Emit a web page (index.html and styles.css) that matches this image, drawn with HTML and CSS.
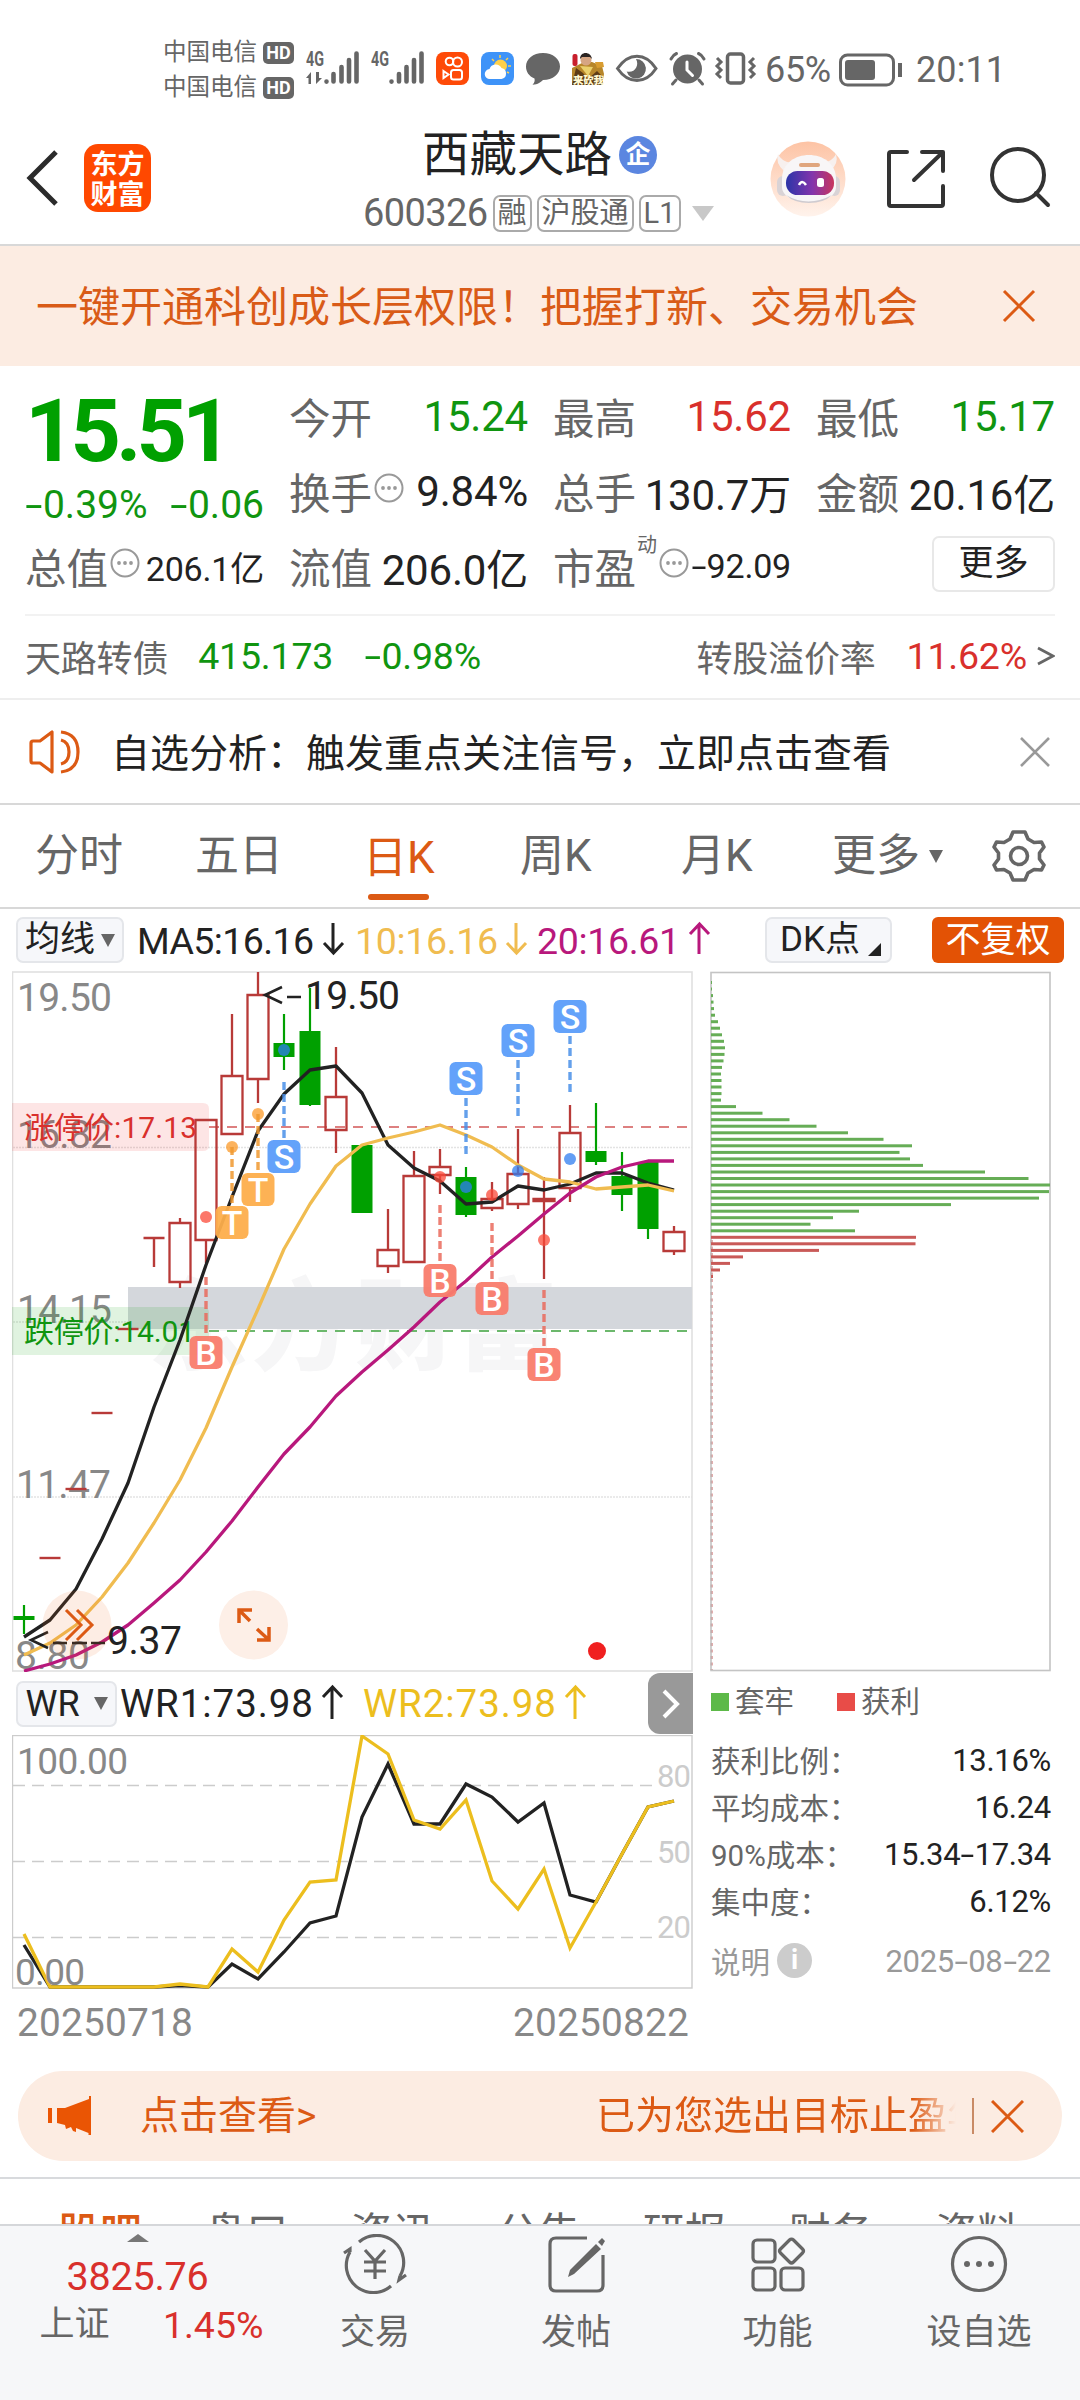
FILE: index.html
```html
<!DOCTYPE html>
<html lang="zh-CN">
<head>
<meta charset="utf-8">
<title>西藏天路 600326</title>
<link rel="stylesheet" href="styles.css">
</head>
<body>
<header class="status">
  <div class="carriers">
    <div class="carrier">中国电信<b>HD</b></div>
    <div class="carrier">中国电信<b>HD</b></div>
  </div>
  <svg class="status-icons" width="452" height="40" viewBox="306 49 452 40">
    <g fill="#666">
      <text x="306" y="66" font-size="20" font-weight="700" textLength="18" lengthAdjust="spacingAndGlyphs">4G</text>
      <text x="371" y="66" font-size="20" font-weight="700" textLength="18" lengthAdjust="spacingAndGlyphs">4G</text>
      <path d="M306 78l5-6v12h-2.500v-6zM316 72v12l6-6h-3v-6z"/>
    </g>
    <g stroke="#666" stroke-width="4.600" stroke-linecap="round">
      <path d="M326.500 81.500v.1M333.500 74v7.500M341.500 67v14.500M349 60v21.500M356.500 53.500v28M391.500 81.500v.1M399 74v7.500M406.500 67v14.500M414 60v21.500M421.500 53.500v28"/>
    </g>
    <rect x="436" y="52" width="33" height="33" rx="8" fill="#fe4a08"/>
    <g fill="none" stroke="#fff" stroke-width="2"><circle cx="449.500" cy="61.500" r="3.800"/><circle cx="457.500" cy="62" r="4.500"/><rect x="451" y="70" width="11" height="9.500" rx="2.500"/><path d="M443.500 71l5 3.500-5 3.500z"/></g>
    <rect x="481" y="52" width="33" height="33" rx="8" fill="#3e93f8"/>
    <circle cx="500.500" cy="66" r="6.500" fill="#ffd04a"/>
    <path d="M500 55v3M508 58l-2 2M511 66h-3M509 73l-2-1M492 59l2 2" stroke="#ffd04a" stroke-width="1.500"/>
    <path d="M490 79a5 5 0 0 1-.5-10 6.500 6.500 0 0 1 12-1 5.600 5.600 0 0 1 0 11z" fill="#fff"/>
    <path d="M543 53c10 0 17 6 17 13.500S553 80 543 80c-2 2-5 4.500-10.500 4.800 2-1.600 2.500-4 2-6.200C529 76 526 72 526 66.500 526 59 533 53 543 53z" fill="#666"/>
    <g>
      <path d="M572 85V68l8-4 4-2h8l10 4 2 8-2 11z" fill="#b7862a"/>
      <path d="M576 68l7 5 5 6 9-8 6 6v8h-31z" fill="#5d3b16"/>
      <path d="M580 66l8 10 5-9z" fill="#ead06c"/>
      <circle cx="586" cy="60" r="5.500" fill="#d6a583"/>
      <path d="M580 59c0-8 11-8 12 0l-2-2h-8z" fill="#2b2422"/>
      <rect x="572.500" y="54" width="5" height="12" rx="2" fill="#c81f2c"/>
      <path d="M595 62h8l1 5-7 1z" fill="#d99d31"/>
      <text x="573" y="84" font-size="10.500" font-weight="900" fill="#fff8d0" textLength="31">来砍我</text>
    </g>
    <path d="M617.500 68.500c11-16.500 28-16.500 38.500 0-10.500 16-27.500 16-38.500 0z" fill="none" stroke="#666" stroke-width="3"/>
    <path d="M636 59a9.800 9.800 0 1 1-9.300 12.500c8 2 13-6 9.300-12.500z" fill="#666"/>
    <circle cx="687.500" cy="69" r="14.500" fill="#666"/>
    <path d="M671 59q2-4 5.500-5.500M704 59q-2-4-5.500-5.500M676 80l-3.500 4M699 80l3.500 4" stroke="#666" stroke-width="3" stroke-linecap="round" fill="none"/>
    <path d="M687 62v8l5.500 5.500" stroke="#fff" stroke-width="3" fill="none" stroke-linecap="round"/>
    <rect x="727.500" y="54" width="16" height="29" rx="3" fill="none" stroke="#666" stroke-width="3.500"/>
    <path d="M717 58l4 4-4 4 4 4-4 4 4 4M754 58l-4 4 4 4-4 4 4 4-4 4" fill="none" stroke="#666" stroke-width="3"/>
  </svg>
  <span class="battery-pct">65%</span>
  <svg width="64" height="34" viewBox="0 0 64 34"><rect x="1.500" y="2" width="53" height="30" rx="7" fill="none" stroke="#666" stroke-width="3"/><rect x="6" y="7" width="30" height="20" rx="3" fill="#666"/><path d="M61 10v14" stroke="#666" stroke-width="4"/></svg>
  <span class="clock">20:11</span>
</header>

<nav class="titlebar">
  <svg class="back" width="34" height="58" viewBox="0 0 34 58"><path d="M30 3L4 29l26 26" fill="none" stroke="#2b2b2b" stroke-width="5"/></svg>
  <div class="logo"><span>东方</span><span>财富</span></div>
  <div class="stock">
    <div class="stock-name">西藏天路<i>企</i></div>
    <div class="stock-code">600326<em>融</em><em>沪股通</em><em>L1</em><svg width="22" height="15" viewBox="0 0 22 15"><path d="M0 0h22L11 15z" fill="#c8c8c8"/></svg></div>
  </div>
  <svg class="robot" width="76" height="76" viewBox="0 0 76 76">
    <defs>
      <linearGradient id="halo" x1="0" y1="0" x2="0" y2="1"><stop offset="0" stop-color="#fdc3a4"/><stop offset="1" stop-color="#fff3ec"/></linearGradient>
      <linearGradient id="visor"><stop offset="0" stop-color="#2c35a8"/><stop offset=".55" stop-color="#8335ac"/><stop offset="1" stop-color="#c8365e"/></linearGradient>
    </defs>
    <circle cx="38" cy="38" r="37.500" fill="url(#halo)"/>
    <path d="M14 30q-9-8-6-17 3 7 13 9zM60 30q9-7 6-17-3 7-13 9z" fill="#f7f0ee"/>
    <rect x="7" y="35" width="12" height="20" rx="6" fill="#d9d3d6"/><rect x="59" y="35" width="11" height="20" rx="6" fill="#d9d3d6"/>
    <path d="M12 38C12 6 66 6 66 38v8c0 20-54 20-54 0z" fill="#f8f6f7"/>
    <path d="M16 54q22 13 46 0-8 8-23 8t-23-8z" fill="#cfcbd0"/>
    <rect x="29" y="22" width="21" height="4" rx="2" fill="#e0a67e"/>
    <rect x="16" y="30" width="48" height="24" rx="11.500" fill="url(#visor)"/>
    <path d="M29 44q3-6 7 0" fill="none" stroke="#fff" stroke-width="2.500"/><rect x="47" y="37" width="7" height="9" rx="2.500" fill="#fff"/>
  </svg>
  <svg class="share" width="60" height="60" viewBox="0 0 60 60"><g fill="none" stroke="#333" stroke-width="4" stroke-linecap="round" stroke-linejoin="round"><path d="M22 4H6q-2 0-2 2v50q0 2 2 2h50q2 0 2-2V38M37 4h21v19M57 5L29 32"/></g></svg>
  <svg width="62" height="62" viewBox="0 0 62 62"><g fill="none" stroke="#333" stroke-width="4" stroke-linecap="round"><circle cx="29" cy="29" r="26"/><path d="M47 47l12 12"/></g></svg>
</nav>

<section class="banner">
  <span>一键开通科创成长层权限！把握打新、交易机会</span>
  <svg width="34" height="34" viewBox="0 0 34 34"><path d="M2 2l30 30M32 2L2 32" stroke="#dc5a14" stroke-width="3"/></svg>
</section>

<section class="quote">
  <div class="price">
    <div class="last">15.51</div>
    <div class="change"><span><u>-</u>0.39%</span><span><u>-</u>0.06</span></div>
  </div>
  <div class="cell"><label>今开</label><span class="down">15.24</span></div>
  <div class="cell"><label>最高</label><span class="up">15.62</span></div>
  <div class="cell"><label>最低</label><span class="down">15.17</span></div>
  <div class="cell"><label>换手</label><svg class="dots" width="30" height="30"><use href="#dots"/></svg><span>9.84%</span></div>
  <div class="cell"><label>总手</label><span>130.7万</span></div>
  <div class="cell"><label>金额</label><span>20.16亿</span></div>
  <div class="cell small"><label>总值</label><svg class="dots" width="30" height="30"><use href="#dots"/></svg><span>206.1亿</span></div>
  <div class="cell"><label>流值</label><span>206.0亿</span></div>
  <div class="cell small"><label>市盈</label><sup>动</sup><svg class="dots" width="30" height="30"><use href="#dots"/></svg><span><u>-</u>92.09</span></div>
  <div class="cell"><button class="more">更多</button></div>
</section>

<section class="bond">
  <span>天路转债</span><span class="down code">415.173</span><span class="down"><u>-</u>0.98%</span>
  <span class="premium">转股溢价率</span><span class="up">11.62%</span>
  <svg width="18" height="20" viewBox="0 0 18 20"><path d="M1 2l15 8-15 8" fill="none" stroke="#666" stroke-width="2.800"/></svg>
</section>

<section class="notice">
  <svg width="52" height="46" viewBox="0 0 52 46"><g fill="none" stroke="#dc5a14" stroke-width="3.200" stroke-linejoin="round"><path d="M23 3v40L11 34H4q-2 0-2-2V14q0-2 2-2h7z"/><path d="M32 11q8 2 8 12t-8 12M32 3q17 2 17 20T32 43"/></g></svg>
  <span>自选分析：触发重点关注信号，立即点击查看</span>
  <svg width="30" height="30" viewBox="0 0 30 30"><path d="M1 1l28 28M29 1L1 29" stroke="#999" stroke-width="2.600"/></svg>
</section>

<nav class="periods">
  <span>分时</span><span>五日</span><span><b class="on">日K</b></span><span>周K</span><span>月K</span><span>更多<svg width="14" height="13" viewBox="0 0 14 13"><path d="M0 0h14L7 13z" fill="#666"/></svg></span>
  <svg class="gear" width="54" height="54" viewBox="-27 -27 54 54"><g fill="none" stroke="#666" stroke-width="3.600" stroke-linejoin="round"><path d="M-6-24H6L9-17l6 3.500 7.500-.5 2.500 5-4.500 6v6l4.500 6-2.500 5-7.500-.5L9 17l-3 7H-6l-3-7-6-3.500-7.500.5-2.500-5 4.500-6v-6L-25-9l2.500-5 7.500.5 6-3.500z"/><circle r="8.500"/></g></svg>
</nav>

<section class="ma">
  <button class="chip">均线<svg width="14" height="13" viewBox="0 0 14 13"><path d="M0 0h14L7 13z" fill="#666"/></svg></button>
  <svg class="ma-values" width="580" height="44" viewBox="138 920 580 44" font-size="37.500">
    <g fill="#222"><text x="137" y="955.500" textLength="177">MA5:16.16</text></g>
    <g fill="#f0bc50"><text x="355" y="955.500" textLength="143">10:16.16</text></g>
    <g fill="#b8187c"><text x="537" y="955.500" textLength="143">20:16.61</text></g>
    <g fill="none" stroke-width="3"><path stroke="#222" d="M333 925v29M324 945l9.500 10 9.500-10"/><path stroke="#f0bc50" d="M516 925v29M507 945l9.500 10 9.500-10"/><path stroke="#b8187c" d="M699 956v-29M690 936l9.500-10 9.500 10"/></g>
  </svg>
  <button class="chip dk">DK点<svg width="13" height="13" viewBox="0 0 13 13"><path d="M13 0v13H0z" fill="#222"/></svg></button>
  <button class="adjust">不复权</button>
</section>

<main class="charts">
  <div class="left">
    <svg class="kline" width="682" height="701" viewBox="12 971 682 701">
      <text x="148" y="1362" font-size="100" font-weight="900" fill="#f6f6f7" textLength="410">东方财富</text>
      <path d="M13 1147.500h679M13 1322h679M13 1497h679" stroke="#e3e3e3" stroke-width="1.500" stroke-dasharray="2 1"/>
      <rect x="12.500" y="972" width="679.500" height="699" fill="none" stroke="#e0e0e0" stroke-width="1.600"/>
      <rect x="128" y="1287" width="564" height="42" fill="#d4d7dc"/>
      <path d="M209 1127h482" stroke="#dd8080" stroke-width="2" stroke-dasharray="10 8"/>
      <path d="M209 1331h482" stroke="#6cb86c" stroke-width="2" stroke-dasharray="10 8"/>
      <g fill="#888" font-size="39">
        <text x="17" y="1011" textLength="95">19.50</text><text x="17" y="1148" textLength="95">16.82</text><text x="17" y="1322.500" textLength="95">14.15</text><text x="16" y="1498" textLength="95">11.47</text><text x="15" y="1669" textLength="75">8.80</text>
      </g>
      <path d="M12 1103h191q6 0 6 6v36q0 6-6 6H12z" fill="#f00000" opacity=".1"/>
      <path d="M12 1307h191q6 0 6 6v36q0 6-6 6H12z" fill="#00a000" opacity=".12"/>
      <g id="candles"></g>
      <text x="24" y="1138" font-size="30" fill="#d9302c" textLength="173">涨停价:17.13</text>
      <text x="24" y="1342" font-size="30" fill="#109510" textLength="171">跌停价:14.01</text>
      <g fill="none" stroke-width="3.300" stroke-linejoin="round">
        <polyline stroke="#222" points="24,1637 50,1620 76,1589 102,1539 128,1483 154,1407 180,1340 206,1265 232,1197 258,1131 284,1094 310,1070 336,1066 362,1093 388,1145 414,1168 440,1181 466,1204 492,1202 518,1186 544,1190 570,1184 596,1173 622,1173 648,1183 674,1190"/>
        <polyline stroke="#f0bc50" points="24,1655 50,1643 76,1625 102,1597 128,1563 154,1523 180,1480 206,1428 232,1367 258,1309 284,1249 310,1204 336,1166 362,1145 388,1138 414,1132 440,1125 466,1135 492,1147 518,1165 544,1179 570,1182 596,1189 622,1187 648,1185 674,1191"/>
        <polyline stroke="#b8187c" points="24,1671 50,1664 76,1655 102,1642 128,1625 154,1603 180,1580 206,1552 232,1521 258,1487 284,1454 310,1427 336,1396 362,1372 388,1350 414,1327 440,1302 466,1281 492,1257 518,1236 544,1214 570,1193 596,1177 622,1167 648,1161 674,1161"/>
      </g>
      <g id="markers"></g>
      <g fill="none" stroke="#222" stroke-width="2.600"><path d="M282 987l-17 8 17 8M287 997h14M48 1632l-17 8 17 8M53 1643h14M72 1643h15M91 1643h14"/></g>
      <text x="305" y="1009" font-size="39" fill="#222" textLength="95">19.50</text>
      <text x="107" y="1654" font-size="39" fill="#222" textLength="75">9.37</text>
      <circle cx="77" cy="1625" r="34.500" fill="#f06820" opacity=".12"/>
      <circle cx="253.500" cy="1625" r="34.500" fill="#fdefe7"/>
      <path d="M66 1610l15 15-15 15M77 1610l15 15-15 15" fill="none" stroke="#dc5a14" stroke-width="3"/>
      <path d="M239 1623v-13h13M239 1610l11 11M257 1640h12v-13M269 1640l-12-11" fill="none" stroke="#dc5a14" stroke-width="3.500"/>
      <circle cx="597" cy="1651" r="9" fill="#f02020"/>
    </svg>
    <div class="wr-head">
      <button class="chip">WR<svg width="14" height="13" viewBox="0 0 14 13"><path d="M0 0h14L7 13z" fill="#666"/></svg></button>
      <svg width="475" height="44" viewBox="120 1682 475 44" font-size="38.500">
        <text x="120" y="1717" fill="#222" textLength="193">WR1:73.98</text><text x="363" y="1717" fill="#ecbe1e" textLength="193">WR2:73.98</text>
        <g fill="none" stroke-width="3"><path stroke="#222" d="M332 1719v-31M323 1697l9.500-10 9.500 10"/><path stroke="#ecbe1e" d="M575 1719v-31M566 1697l9.500-10 9.500 10"/></g>
      </svg>
      <div class="toggle"><svg width="18" height="30" viewBox="0 0 18 30"><path d="M2 2l13 13L2 28" fill="none" stroke="#fff" stroke-width="4"/></svg></div>
    </div>
    <svg width="682" height="254" viewBox="12 1735 682 254">
      <rect x="12.500" y="1735.500" width="679.500" height="252.500" fill="none" stroke="#ccc" stroke-width="1.400"/>
      <path d="M13 1785.500h642M13 1861.500h642M13 1937.500h642" stroke="#ccc" stroke-width="1.400" stroke-dasharray="12 7"/>
      <g fill="#ccc" font-size="31"><text x="657" y="1787" textLength="34">80</text><text x="657" y="1863" textLength="34">50</text><text x="657" y="1938" textLength="34">20</text></g>
      <g fill="none" stroke-width="3.300">
        <polyline stroke="#222" points="24,1945 50,1987 154,1987 180,1985.500 208,1987 232,1964 258,1979 284,1952 310,1923 336,1916 362,1817 388,1764 414,1824 440,1824 466,1784 492,1797 518,1822 544,1803 570,1895 596,1902 622,1854 648,1807 674,1801"/>
        <polyline stroke="#ecbe1e" points="24,1934 50,1987 154,1987 180,1984 208,1987 232,1949 258,1972 284,1920 310,1882 336,1880 362,1736 388,1754 414,1820 440,1829 466,1800 492,1881 518,1909 544,1869 570,1948 596,1902 622,1854 648,1807 674,1801"/>
      </g>
      <g fill="#888" font-size="37"><text x="17" y="1774" textLength="111">100.00</text><text x="15" y="1985" textLength="70">0.00</text></g>
    </svg>
    <div class="dates"><span>20250718</span><span>20250822</span></div>
  </div>
  <div class="right">
    <svg width="342" height="701" viewBox="710 971 342 701">
      <path d="M711.500 1240v430" stroke="#c65d5c" stroke-width="2" stroke-dasharray="3 3.500"/>
      <rect x="711" y="972.500" width="339" height="698" fill="none" stroke="#c4c4c4" stroke-width="1.600"/>
      <g id="chips"></g>
    </svg>
    <div class="legend"><span><i class="g"></i>套牢</span><span><i class="r"></i>获利</span></div>
    <dl class="stats">
      <div><dt>获利比例：</dt><dd>13.16%</dd></div>
      <div><dt>平均成本：</dt><dd>16.24</dd></div>
      <div><dt>90%成本：</dt><dd>15.34<u>-</u>17.34</dd></div>
      <div><dt>集中度：</dt><dd>6.12%</dd></div>
      <div class="explain"><dt>说明<i>i</i></dt><dd>2025<u>-</u>08<u>-</u>22</dd></div>
    </dl>
  </div>
</main>

<section class="promo">
  <svg width="46" height="40" viewBox="0 0 46 40"><path d="M43 0v39h-2.500V37L28 32v4l-3-1-2-4-5 2-1-4-8-2V12h8L41 3V0zM0 12h4v15H0z" fill="#ea5504"/></svg>
  <span class="promo-link">点击查看&gt;</span>
  <span class="promo-text">已为您选出目标止盈年</span>
  <i class="bar"></i>
  <svg width="33" height="33" viewBox="0 0 33 33"><path d="M1 1l31 31M32 1L1 32" stroke="#dc5a14" stroke-width="3"/></svg>
</section>

<nav class="subtabs"><span class="on">股吧</span><span>盘口</span><span>资讯</span><span>公告</span><span>研报</span><span>财务</span><span>资料</span></nav>

<footer class="dock">
  <div class="index">
    <svg width="22" height="8" viewBox="0 0 22 8"><path d="M0 8h22L11 0z" fill="#777"/></svg>
    <strong>3825.76</strong>
    <p><span>上证</span><b>1.45%</b></p>
  </div>
  <a><svg width="66" height="60" viewBox="-33 -30 66 60"><g fill="none" stroke="#666" stroke-width="3.200"><path d="M-16-22A27 27 0 0 1 25 12M25 12l-1 4 7-5M16 22A27 27 0 0 1-25-12M-25-12l0-3-6 4"/><path d="M-10-14L0-3 10-14M-11-2h22M-11 7h22M0-3v18"/></g></svg>交易</a>
  <a><svg width="60" height="60" viewBox="0 0 60 60"><g fill="none" stroke="#666" stroke-width="3.200"><path d="M41 4H10q-6 0-6 6v41q0 6 6 6h41q6 0 6-6V21"/></g><path d="M50 10l5 5-27 25-6 3 2-7zM52 8l4-4 3 3-3 5z" fill="#666"/></svg>发帖</a>
  <a><svg width="60" height="60" viewBox="0 0 60 60"><g fill="none" stroke="#666" stroke-width="3.200"><rect x="5" y="6" width="22" height="22" rx="4"/><rect x="5" y="34" width="22" height="22" rx="4"/><rect x="33" y="34" width="22" height="22" rx="4"/><path d="M41.500 6q2-2 4 0l9 9q2 2 0 4l-9 9q-2 2-4 0l-9-9q-2-2 0-4z"/></g></svg>功能</a>
  <a><svg width="60" height="60" viewBox="0 0 60 60"><circle cx="30" cy="30" r="26.500" fill="none" stroke="#666" stroke-width="3.200"/><g fill="#666"><circle cx="18" cy="30" r="3"/><circle cx="30" cy="30" r="3"/><circle cx="42" cy="30" r="3"/></g></svg>设自选</a>
</footer>

<svg class="defs" width="0" height="0"><symbol id="dots" viewBox="0 0 30 30"><circle cx="15" cy="15" r="13.500" fill="none" stroke="#999" stroke-width="2"/><g fill="#999"><circle cx="9" cy="15" r="1.900"/><circle cx="15" cy="15" r="1.900"/><circle cx="21" cy="15" r="1.900"/></g></symbol></svg>
<script src="chart.js"></script>
</body>
</html>
```
FILE: styles.css
```css
* { box-sizing: border-box; margin: 0; padding: 0; }
body {
  width: 1080px; height: 2400px; overflow: hidden; background: #fff; color: #666;
  font-family: Roboto, "Noto Sans CJK SC", sans-serif;
  display: flex; flex-direction: column;
}
svg { display: block; flex: none; font-family: Roboto, "Noto Sans CJK SC", sans-serif; }
i, em { font-style: normal; }
button { font: inherit; border: 0; background: none; }
u { display: inline-block; width: .46em; text-align: center; text-decoration: none; transform: scaleX(1.6); }
.up { color: #d9302c; }
.down { color: #109510; }
.defs { position: absolute; }

.status { height: 122px; padding: 18px 0 0 163px; display: flex; align-items: center; }
.carriers { width: 143px; font-size: 23.500px; }
.carrier { display: flex; align-items: center; height: 35px; gap: 6px; line-height: 35px; }
.carrier b { width: 31px; height: 22px; border-radius: 5px; background: #666; color: #fff; font-size: 18px; line-height: 22px; text-align: center; }
.status-icons { margin-top: -2px; }
.battery-pct { width: 81px; padding-left: 7px; font-size: 36px; line-height: 36px; letter-spacing: -.3px; }
.clock { margin-left: 13px; font-size: 36px; line-height: 36px; letter-spacing: .1px; }

.titlebar { height: 124px; border-bottom: 2px solid #d8d8d8; display: flex; padding: 0 28px 0 26px; align-items: flex-start; }
.back { margin-top: 27px; }
.logo { width: 67px; height: 68px; margin: 22px 0 0 24px; border-radius: 14px; background: #ff4800; color: #fff; display: flex; flex-direction: column; justify-content: center; font: 700 27px/30px "Noto Sans CJK SC", sans-serif; text-align: center; }
.stock { width: 426px; margin-left: 174px; padding-left: 38px; display: flex; flex-direction: column; align-items: flex-start; }
.stock-name { margin: 5px 0 0 59px; font-size: 47.500px; line-height: 52px; height: 55px; color: #222; display: flex; align-items: center; gap: 7px; }
.stock-name i { width: 38px; height: 38px; border-radius: 50%; background: #5b86e0; color: #fff; font-size: 25px; font-weight: 700; line-height: 38px; text-align: center; }
.stock-code { margin-top: 12px; height: 38px; font-size: 38px; line-height: 38px; letter-spacing: -.6px; display: flex; align-items: center; gap: 5px; }
.stock-code em { height: 37px; border: 2px solid #aaa; border-radius: 7px; padding: 0 3px; font-size: 29px; line-height: 32px; letter-spacing: 0; }
.stock-code svg { margin-left: 6px; }
.robot { margin: 19px 0 0 19px; }
.share { margin: 26px 44px 0 39px; }
.titlebar > svg:last-child { margin-top: 24px; }

.banner { height: 120px; background: #fcece2; display: flex; align-items: center; justify-content: space-between; padding: 2px 44px 2px 36px; font-size: 42px; line-height: 60px; color: #d95b17; }
.banner span { padding-top: 3px; }

.quote { height: 248px; padding: 12px 25px 0; display: grid; grid-template-columns: 239px 239px 238px 239px; grid-template-rows: 75px 75px 75px; column-gap: 25px; font-size: 42px; color: #222; }
.price { grid-row: span 2; color: #109510; padding-top: 2px; }
.last { height: 102px; font-size: 88px; line-height: 102px; font-weight: 700; letter-spacing: -5px; color: #00a000; }
.change { display: flex; justify-content: space-between; font-size: 39px; line-height: 46px; }
.cell { display: flex; align-items: center; }
.cell label { color: #666; font-size: 41.500px; }
.cell span { margin-left: auto; letter-spacing: -.2px; padding-top: 1px; }
.cell .dots { margin: -5px 0 0 2px; }
.cell sup { font-size: 20px; color: #666; align-self: flex-start; margin-top: 5px; line-height: 24px; margin-left: 1px; }
.small span { font-size: 34px; }
.more { width: 123px; height: 56px; margin: -4px 0 0 auto; border: 2px solid #e8e8e8; border-radius: 7px; font-size: 35px; line-height: 50px; color: #222; }

.bond { height: 84px; margin: 0 25px; padding-bottom: 2px; border-top: 2px solid #f2f2f2; display: flex; align-items: center; font-size: 36px; letter-spacing: -.2px; }
.bond .up, .bond .down { font-size: 37.500px; }
.bond .code { margin: 0 31px 0 30px; }
.premium { margin-left: auto; margin-right: 31px; }
.bond svg { margin-left: 10px; }

.notice { height: 107px; border-top: 2px solid #eee; border-bottom: 2px solid #d8d8d8; display: flex; align-items: center; padding: 0 30px 0 29px; font-size: 39px; color: #222; }
.notice span { margin: -3px auto 0 30px; }

.periods { height: 104px; border-bottom: 2px solid #d8d8d8; padding-left: 35px; display: grid; grid-template-columns: 160px 168px 157px 161px 151px 160px auto; align-items: center; font-size: 44px; line-height: 106px; }
.periods span { display: flex; align-items: center; gap: 9px; height: 102px; }
.periods .on { position: relative; height: 102px; font-weight: 400; color: #dc5a14; }
.periods .on::after { content: ""; position: absolute; left: 5px; right: 6px; bottom: 7px; height: 6px; border-radius: 3px; background: #dc5a14; }

.ma { height: 62px; padding: 0 16px; display: flex; align-items: center; }
.chip { height: 46px; border: 2px solid #e4e6ea; border-radius: 7px; background: #f6f7fa; color: #222; font-size: 35px; line-height: 42px; display: flex; align-items: center; justify-content: center; gap: 6px; }
.ma .chip { width: 108px; }
.ma-values { margin-left: 14px; }
.ma .dk { width: 127px; margin-left: 47px; gap: 8px; }
.dk svg { align-self: flex-end; margin-bottom: 5px; margin-right: -4px; }
.adjust { width: 132px; height: 46px; margin-left: auto; border-radius: 6px; background: #e35205; color: #fff; font-size: 35px; line-height: 47px; }

.charts { height: 1083px; padding-left: 12px; display: flex; gap: 16px; }
.left, .right { display: flex; flex-direction: column; }
.wr-head { height: 63px; padding-left: 4px; display: flex; align-items: center; }
.wr-head .chip { width: 101px; gap: 14px; font-size: 36px; }
.wr-head > svg { margin-left: 3px; }
.toggle { width: 45px; height: 61px; margin-left: auto; margin-right: 1px; border-radius: 12px 0 0 12px; background: #999; display: flex; align-items: center; justify-content: center; }
.dates { display: flex; justify-content: space-between; padding: 9px 5px 0 5px; font-size: 38.800px; line-height: 50px; letter-spacing: .2px; color: #888; }
.right { width: 342px; }
.legend { height: 60px; display: flex; gap: 43px; align-items: center; font-size: 29.500px; line-height: 56px; padding: 0 0 1px 1px; }
.legend span { display: flex; align-items: center; gap: 6px; }
.legend i { width: 18px; height: 18px; }
.legend .g { background: #5db948; }
.legend .r { background: #e84c48; }
.stats { padding-top: 5px; font-size: 29.500px; }
.stats div { height: 47px; padding: 0 1px 0 1px; display: flex; align-items: center; justify-content: space-between; }
.stats dt { padding-bottom: 3px; }
.stats dd { color: #222; font-size: 31px; letter-spacing: -.3px; }
.stats .explain { margin-top: 13px; color: #999; }
.explain dt { display: flex; align-items: center; gap: 7px; }
.stats .explain dd { color: #999; }
.explain i { width: 35px; height: 35px; border-radius: 50%; background: #ccc; color: #fff; font-size: 27px; font-weight: 700; line-height: 35px; text-align: center; }

.promo { height: 90px; margin: 17px 18px 0; border-radius: 45px; background: #fcece2; display: flex; align-items: center; padding: 0 38px 0 30px; font-size: 39px; line-height: 60px; color: #dc5a14; }
.promo-link { margin-left: 46px; }
.promo-text { margin-left: auto; width: 360px; overflow: hidden; white-space: nowrap; -webkit-mask-image: linear-gradient(90deg, #000 88%, transparent 100%); mask-image: linear-gradient(90deg, #000 88%, transparent 100%); }
.bar { width: 2px; height: 36px; margin: 0 17px 0 16px; background: #c98b66; }

.subtabs { height: 47px; margin-top: 16px; border-top: 2px solid #d8dadd; overflow: hidden; display: flex; justify-content: space-between; padding: 30px 61px 0 58px; font-size: 42px; line-height: 50px; }
.subtabs .on { color: #dc5a14; font-weight: 500; }

.dock { height: 176px; background: #f6f7f9; border-top: 2px solid #d5d7da; display: grid; grid-template-columns: 275px 200px 202px 201px 202px; font-size: 35px; }
.dock a { display: flex; flex-direction: column; align-items: center; padding-top: 8px; gap: 15px; line-height: 48px; }
.index { padding-top: 8px; display: flex; flex-direction: column; align-items: center; color: #d9302c; }
.index strong { font-weight: 400; font-size: 39.500px; line-height: 50px; margin-top: 10px; letter-spacing: -.2px; }
.index p { display: flex; align-items: center; width: 224px; margin: 5px 0 0 28px; justify-content: space-between; line-height: 36px; }
.index p span { color: #666; }
.index b { font-weight: 400; font-size: 37.500px; }
```
FILE: chart.js
```js
const UP = '#b83a38', DOWN = '#00a000';

// x, body top, body bottom, wick top, wick bottom, rising
const candles = [
  [24, 1616, 1620, 1605, 1634, 0], [50, 1558, 1558, 1558, 1558, 1], [76, 1489, 1489, 1489, 1489, 1],
  [102, 1413, 1413, 1413, 1413, 1], [128, 1329, 1329, 1329, 1329, 1], [154, 1238, 1238, 1238, 1267, 1],
  [180, 1223, 1282, 1218, 1288, 1], [206, 1120, 1240, 1120, 1263, 1], [232, 1076, 1134, 1014, 1135, 1],
  [258, 995, 1079, 972, 1103, 1], [284, 1043, 1057, 1014, 1070, 0], [310, 1031, 1105, 988, 1106, 0],
  [336, 1097, 1130, 1047, 1153, 1], [362, 1145, 1213, 1145, 1213, 0], [388, 1250, 1266, 1209, 1273, 1],
  [414, 1176, 1262, 1151, 1262, 1], [440, 1167, 1175, 1149, 1194, 1], [466, 1177, 1215, 1167, 1217, 0],
  [492, 1199, 1208, 1182, 1211, 1], [518, 1174, 1204, 1129, 1209, 1], [544, 1199, 1201, 1177, 1279, 1],
  [570, 1133, 1188, 1105, 1202, 1], [596, 1151, 1162, 1103, 1165, 0], [622, 1176, 1195, 1152, 1211, 0],
  [648, 1162, 1229, 1162, 1239, 0], [674, 1232, 1251, 1226, 1255, 1]
];
document.getElementById('candles').innerHTML = candles.map(([x, t, b, hi, lo, rise]) => {
  if (!rise) return `<path d="M${x} ${hi}V${lo}" stroke="${DOWN}" stroke-width="2.2"/><rect x="${x - 10.5}" y="${t}" width="21" height="${b - t}" fill="${DOWN}"/>`;
  if (t === b) return `<path d="M${x - 10.5} ${t}h21M${x} ${t}V${lo}" stroke="${UP}" stroke-width="2.4"/>`;
  return `<path d="M${x} ${hi}V${t}M${x} ${b}V${lo}M${x - 10.5} ${t}h21V${b}h-21z" fill="none" stroke="${UP}" stroke-width="2.3"/>`;
}).join('');

const tint = { S: '#5b9dfa', T: '#fdae4c', B: '#f97c6c' };
const line = { S: '#4a90e8', T: '#f0982e', B: '#ea6a5c' };
// letter, x, badge top, dash start, dash end, dot
const markers = [
  ['B', 206, 1336, 1277, 1333, 1217], ['T', 232, 1206, 1147, 1203, 1147], ['T', 258, 1173, 1114, 1170, 1114],
  ['S', 284, 1140, 1082, 1138, 1050], ['B', 440, 1264, 1205, 1261, 1177], ['S', 466, 1062, 1098, 1154, 1187],
  ['B', 492, 1282, 1223, 1279, 1195], ['S', 518, 1024, 1060, 1116, 1171], ['B', 544, 1348, 1290, 1346, 1240],
  ['S', 570, 1000, 1036, 1092, 1159]
];
const dot = { S: '#2f7df0', T: '#fb9a28', B: '#fb4a38' };
document.getElementById('markers').innerHTML = markers.map(([c, x, y, a, b, d]) =>
  `<circle cx="${x}" cy="${d}" r="6" fill="${dot[c]}" opacity=".75"/>
   <path d="M${x} ${a}V${b}" stroke="${line[c]}" stroke-width="3.4" stroke-dasharray="8 4" opacity=".85"/>
   <rect x="${x - 16.5}" y="${y}" width="33" height="33" rx="6" fill="${tint[c]}" opacity=".95"/>
   <text x="${x}" y="${y + 28.5}" font-size="34" font-weight="500" fill="#fff" text-anchor="middle">${c}</text>`
).join('');

const held = [1, 1, 2, 2.5, 3, 4, 7, 9, 11, 13, 14, 13.5, 12.5, 11, 10, 10.5, 10.5, 10.5, 10, 25, 51.5, 78.5, 105.5,
  137, 172.5, 201, 188.5, 199, 212, 274, 317.5, 339, 338, 328, 240, 148, 122, 99.5, 144];
const profit = [205, 204.5, 108, 32, 19, 9, 2];
document.getElementById('chips').innerHTML = held.concat(profit).map((w, i) =>
  `<rect x="711" y="${(981 + i * 6.533).toFixed(1)}" width="${w}" height="3" fill="${i < held.length ? '#66ad56' : '#c95a58'}"/>`
).join('');
```
